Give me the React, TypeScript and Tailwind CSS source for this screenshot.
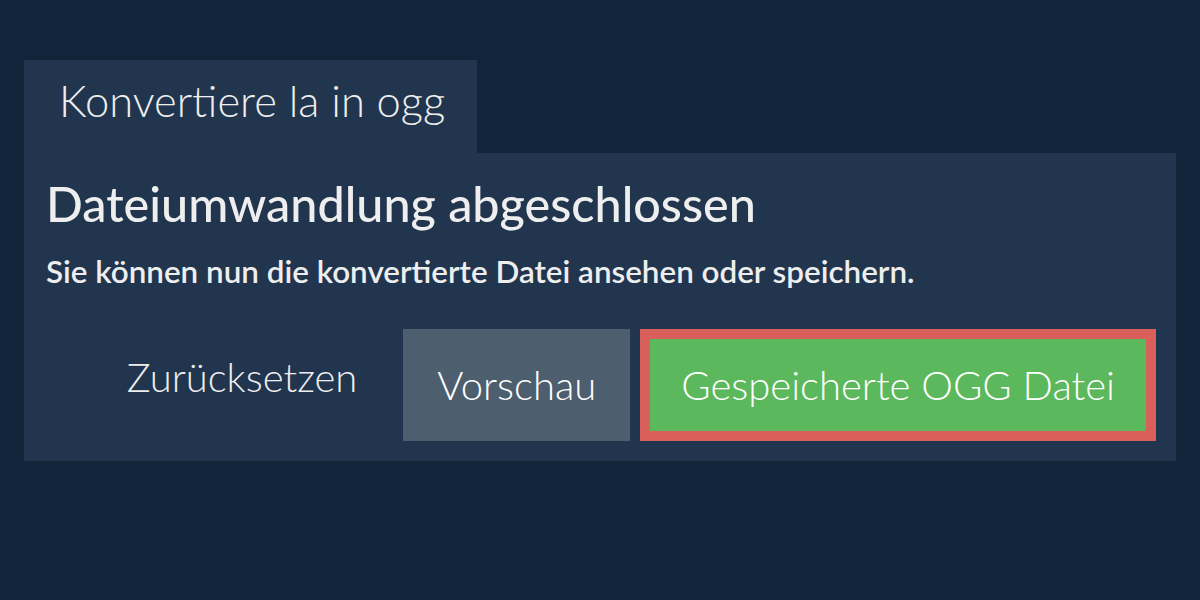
export default function App() {
  return (
    <div
      className="w-[1200px] h-[600px] bg-[#11243a] pt-[60px] px-[24px] text-[#eeeeee]"
      style={{ fontFamily: "Lato, 'Open Sans', sans-serif" }}
    >
      <div className="w-[453px] h-[93px] bg-[#21354e] pl-[35px] pt-[14px] text-[43.5px] leading-[52px] font-light">
        Konvertiere la in ogg
      </div>
      <div className="bg-[#21354e] pl-[22px] pr-[20px] pt-[21px] pb-[20px]">
        <h1 className="text-[48.5px] leading-[58px] font-medium">Dateiumwandlung abgeschlossen</h1>
        <p className="mt-[21px] text-[31.4px] leading-[37px] font-semibold">
          Sie können nun die konvertierte Datei ansehen oder speichern.
        </p>
        <div className="mt-[39px] flex justify-end items-stretch gap-[10px]">
          <button className="h-[112px] px-[36px] pb-[16px] text-[40px] font-light bg-transparent">
            Zurücksetzen
          </button>
          <button className="h-[112px] px-[34px] text-[40px] font-light text-white bg-[#4d5e6f]">
            Vorschau
          </button>
          <button className="h-[112px] px-[31px] text-[40px] font-light text-white bg-[#5cb85c] border-[10px] border-[#d9605a]">
            Gespeicherte OGG Datei
          </button>
        </div>
      </div>
    </div>
  );
}
